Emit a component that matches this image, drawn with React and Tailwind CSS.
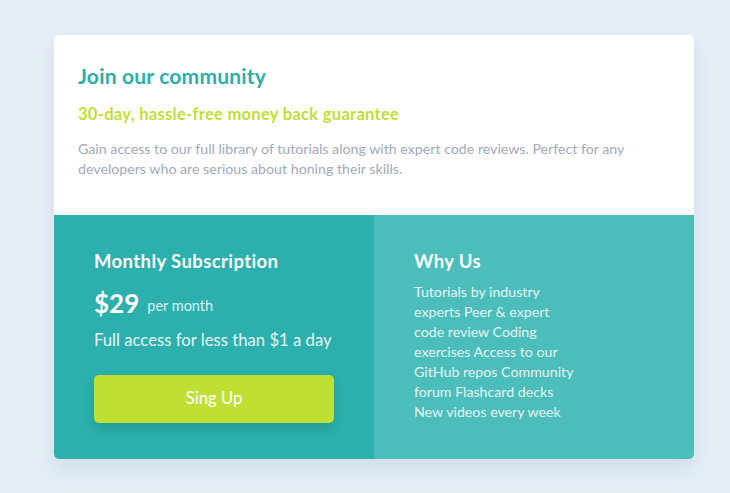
export default function App() {
  const font = { fontFamily: 'Lato, "Liberation Sans", sans-serif' };
  return (
    <div className="min-h-[493px] w-full bg-[#e5eef5] pt-[35px]" style={font}>
      <div className="ml-[54px] w-[640px] overflow-hidden rounded-[5px] bg-white shadow-[0_10px_20px_rgba(100,130,160,0.15)]">
        <div className="h-[180px] px-6 pt-[27px]">
          <h1 className="text-[21px] font-bold leading-[28px] tracking-[0.2px] text-[#2aafac]">Join our community</h1>
          <h2 className="mt-[13px] text-[16.5px] font-bold leading-[22px] tracking-[0.3px] text-[#bfdf32]">30-day, hassle-free money back guarantee</h2>
          <p className="mt-[14px] text-[14.2px] leading-[20px] text-[#a0aac0]">
            Gain access to our full library of tutorials along with expert code reviews. Perfect for any developers who are serious about honing their skills.
          </p>
        </div>
        <div className="flex h-[244px]">
          <div className="w-[320px] bg-[#2bb0ad] px-10 pt-[34px]">
            <h3 className="text-[18.5px] font-bold leading-[24px] tracking-[0.4px] text-white">Monthly Subscription</h3>
            <div className="mt-[14px] flex items-center gap-[8px] text-white">
              <span className="text-[26px] font-bold leading-[32px]">$29</span>
              <span className="mt-[5px] text-[14.5px] text-[#dff2f1]">per month</span>
            </div>
            <p className="mt-[11px] text-[16.7px] leading-[20px] text-[#e5f5f4]">Full access for less than $1 a day</p>
            <button className="mt-[25px] h-12 w-[240px] rounded-[5px] bg-[#bfe032] text-[16.7px] text-white shadow-[0_6px_12px_rgba(0,0,0,0.12)]">Sing Up</button>
          </div>
          <div className="w-[320px] bg-[#4bbdbb] px-10 pt-[34px]">
            <h3 className="text-[18.5px] font-bold leading-[24px] tracking-[0.4px] text-white">Why Us</h3>
            <p className="mt-[9px] w-[168px] text-[14.2px] leading-[20px] text-[#e5f5f4]">
              Tutorials by industry experts Peer &amp; expert code review Coding exercises Access to our GitHub repos Community forum Flashcard decks New videos every week
            </p>
          </div>
        </div>
      </div>
    </div>
  );
}
